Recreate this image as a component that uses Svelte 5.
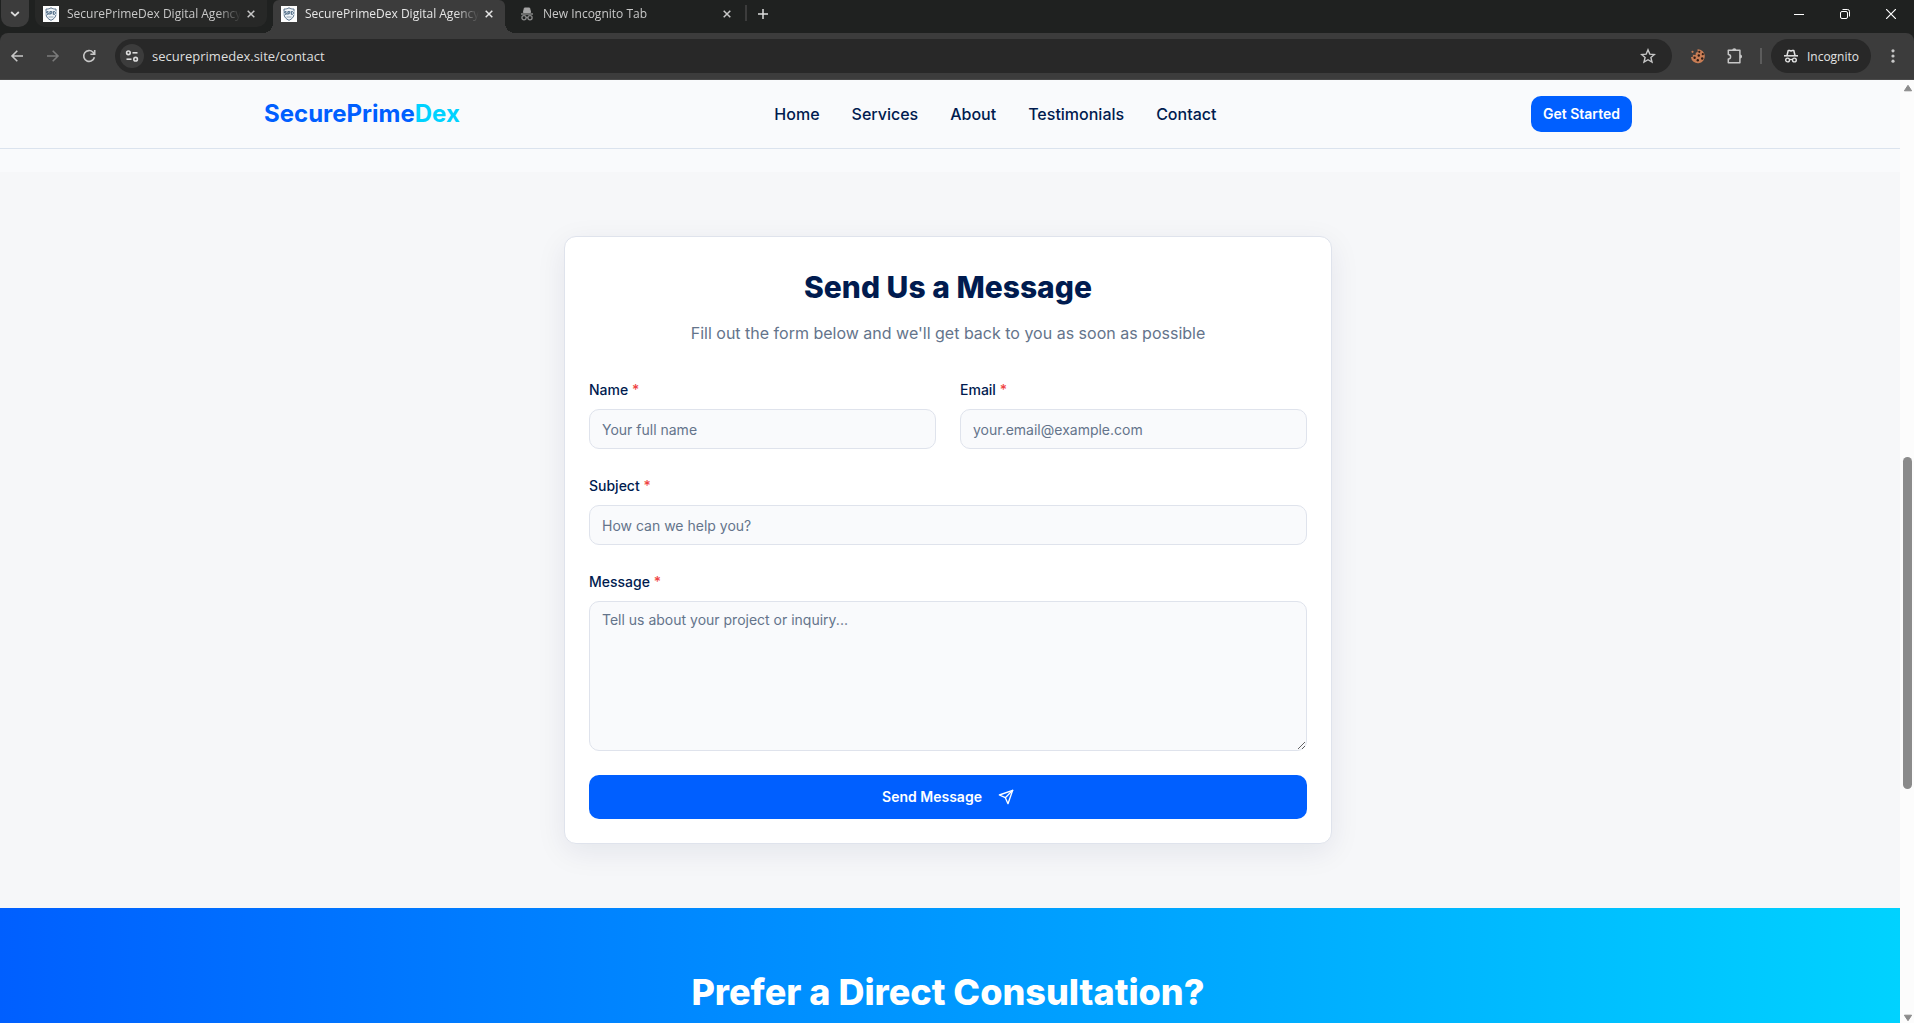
<script>
  const tabs = [
    { title: 'SecurePrimeDex Digital Agency', icon: 'shield', active: false },
    { title: 'SecurePrimeDex Digital Agency', icon: 'shield', active: true },
    { title: 'New Incognito Tab', icon: 'incognito', active: false }
  ];

  const links = ['Home', 'Services', 'About', 'Testimonials', 'Contact'];

  let address = $state('secureprimedex.site/contact');
  let form = $state({ name: '', email: '', subject: '', message: '' });

  function submit(event) {
    event.preventDefault();
  }
</script>

{#snippet incognito(size)}
  <svg width={size} height={size} viewBox="0 0 16 16" fill="none" aria-hidden="true">
    <path d="M1 7.800h14" stroke="currentColor" stroke-width="1.500" />
    <path d="M4 7.500 5.200 2.500h1.400L8 3l1.400-.5h1.400L12 7.500" stroke="currentColor" stroke-width="1.500" stroke-linejoin="round" />
    <circle cx="4.600" cy="12" r="1.900" stroke="currentColor" stroke-width="1.400" />
    <circle cx="11.400" cy="12" r="1.900" stroke="currentColor" stroke-width="1.400" />
    <path d="M6.400 11.800q1.600-1 3.200 0" stroke="currentColor" stroke-width="1.200" />
  </svg>
{/snippet}

{#snippet cross()}
  <svg width="8" height="8" viewBox="0 0 8 8" aria-hidden="true">
    <path d="M.7.7l6.600 6.600M7.300.7.7 7.300" stroke="currentColor" stroke-width="1.500" />
  </svg>
{/snippet}

<div class="window">
  <div class="strip">
    <button class="search-tabs" aria-label="Search tabs">
      <svg width="10" height="6" viewBox="0 0 10 6" fill="none" aria-hidden="true">
        <path d="M1.200 1 5 4.600 8.800 1" stroke="currentColor" stroke-width="1.800" />
      </svg>
    </button>

    <div class="tabs">
      {#each tabs as tab}
        <div class="tab" class:active={tab.active} class:plain={tab.icon === 'incognito'}>
          {#if tab.icon === 'shield'}
            <svg class="favicon" width="16" height="16" viewBox="0 0 16 16" aria-hidden="true">
              <path d="M0 0h16v16H0z" fill="#fdfdfd" />
              <path d="M8 1.800c1.600 1 3.200 1.300 5 1.300v4.800c0 3.200-2.200 5.200-5 6.400C5.200 13.100 3 11.100 3 7.900V3.100c1.800 0 3.400-.3 5-1.300z" fill="#eef3f7" stroke="#58718a" stroke-width="1" />
              <path d="M2.500 5h11v4h-11z" fill="#dfe8ef" />
              <path d="M5.400 5.600H3.600v1.300h1.700v1.400H3.500M6.900 8.800V5.600h1.900v1.700H6.900M10.400 5.500v2.900h1.100l.8-.7V6.200l-.8-.7z" fill="none" stroke="#3f5d7a" stroke-width=".9" />
              <path d="M5.500 11h5" stroke="#7890a5" stroke-width=".8" />
            </svg>
          {:else}
            <svg class="favicon" width="16" height="16" viewBox="0 0 16 16" fill="none" aria-hidden="true">
              <path d="M5.400 2h5.200l1 4.500H4.400z" fill="#a5a5a5" stroke="#a5a5a5" stroke-width="1" stroke-linejoin="round" />
              <path d="M2 8h12" stroke="#8b8b8b" stroke-width="1.400" />
              <circle cx="5" cy="11.800" r="2.100" stroke="#8b8b8b" stroke-width="1.300" />
              <circle cx="11" cy="11.800" r="2.100" stroke="#8b8b8b" stroke-width="1.300" />
              <path d="M7 11.500h2" stroke="#8b8b8b" />
            </svg>
          {/if}
          <button class="tab-title">{tab.title}</button>
          <button class="tab-close" aria-label="Close tab">{@render cross()}</button>
        </div>
      {/each}
    </div>

    <span class="strip-rule"></span>
    <button class="new-tab" aria-label="New tab">
      <svg width="10" height="10" viewBox="0 0 10 10" aria-hidden="true">
        <path d="M5 0v10M0 5h10" stroke="currentColor" stroke-width="1.500" />
      </svg>
    </button>

    <div class="controls">
      <button aria-label="Minimize">
        <svg width="10" height="10" viewBox="0 0 10 10"><path d="M0 5.500h10" stroke="currentColor" /></svg>
      </button>
      <button aria-label="Restore">
        <svg width="10" height="10" viewBox="0 0 10 10" fill="none" stroke="currentColor">
          <rect x=".5" y="2.500" width="7" height="7" rx="1.500" />
          <path d="M2.500.5h5a2 2 0 0 1 2 2v5" />
        </svg>
      </button>
      <button aria-label="Close">
        <svg width="10" height="10" viewBox="0 0 10 10"><path d="M0 0l10 10M10 0 0 10" stroke="currentColor" stroke-width="1.200" /></svg>
      </button>
    </div>
  </div>

  <div class="toolbar">
    <div class="history">
      <button aria-label="Back">
        <svg width="14" height="14" viewBox="0 0 14 14" fill="none" stroke="currentColor" stroke-width="1.600"><path d="M13 7H2.200M7.300 1.700 2 7l5.300 5.300" /></svg>
      </button>
      <button class="dim" aria-label="Forward">
        <svg width="14" height="14" viewBox="0 0 14 14" fill="none" stroke="currentColor" stroke-width="1.600"><path d="M1 7h10.800M6.700 1.700 12 7l-5.300 5.300" /></svg>
      </button>
      <button aria-label="Reload">
        <svg width="14" height="14" viewBox="0 0 14 14" fill="none" stroke="currentColor" stroke-width="1.600"><path d="M12.400 8.200A5.400 5.400 0 1 1 11 3.200l1.600 1.700M12.700 1v4.300H8.400" /></svg>
      </button>
    </div>

    <div class="address">
      <button class="site-info" aria-label="View site information">
        <svg width="14" height="14" viewBox="0 0 14 14" fill="none" stroke="currentColor" stroke-width="1.600">
          <circle cx="3.400" cy="3.800" r="1.800" /><path d="M7.500 3.800H12.500" />
          <circle cx="10.600" cy="10.200" r="1.800" /><path d="M1.500 10.200h5" />
        </svg>
      </button>
      <input type="text" aria-label="Address" bind:value={address} spellcheck="false" />
      <button class="star" aria-label="Bookmark this tab">
        <svg width="16" height="16" viewBox="0 0 16 16" fill="none" stroke="currentColor" stroke-width="1.400"><path d="M8 1.800l1.800 4.300 4.600.4-3.500 3 1.100 4.600L8 11.700l-4 2.400 1.100-4.600-3.500-3 4.600-.4z" /></svg>
      </button>
    </div>

    <div class="extensions">
      <button aria-label="Cookie extension">
        <svg width="16" height="16" viewBox="0 0 16 16" aria-hidden="true">
          <path d="M7.500 1.200a7 7 0 1 1-6.600 8L3.300 8.600 2.600 6.800l3 .2.200-2.200 1.900-.8z" fill="#c87d55" />
          <circle cx="2.500" cy="3.800" r="1.100" fill="#c87d55" />
          <g fill="#2f1c14">
            <circle cx="9.300" cy="3.800" r="1.100" /><circle cx="12.800" cy="6.200" r="1.100" /><circle cx="8.800" cy="7.500" r="1.200" />
            <circle cx="12.200" cy="10.500" r="1.200" /><circle cx="4.600" cy="9.800" r="1.200" /><circle cx="7.800" cy="12.300" r="1.200" />
          </g>
        </svg>
      </button>
      <button aria-label="Extensions">
        <svg width="18" height="18" viewBox="0 0 18 18" fill="none" aria-hidden="true">
          <path d="M2.300 3.300h11.600v12.400H2.300v-3.600a2.300 2.300 0 0 0 0-4.600z" stroke="currentColor" stroke-width="1.500" stroke-linejoin="round" />
          <path d="M6.200 3.300a2.100 2.100 0 0 1 4.200 0zM14 7.400a2.100 2.100 0 0 1 0 4.200z" fill="currentColor" />
        </svg>
      </button>
    </div>
    <span class="toolbar-rule"></span>
    <button class="profile">{@render incognito(16)}Incognito</button>
    <button class="menu" aria-label="Menu">
      <svg width="4" height="14" viewBox="0 0 4 14" fill="currentColor"><circle cx="2" cy="1.800" r="1.600" /><circle cx="2" cy="7" r="1.600" /><circle cx="2" cy="12.200" r="1.600" /></svg>
    </button>
  </div>

  <div class="viewport">
    <div class="page">
      <header>
        <div class="bar">
          <a class="logo" href="#home">SecurePrime<span>Dex</span></a>
          <nav>
            {#each links as link}
              <a href={'#' + link.toLowerCase()}>{link}</a>
            {/each}
          </nav>
          <button class="primary start">Get Started</button>
        </div>
      </header>

      <main>
        <section class="contact">
          <form class="card" onsubmit={submit}>
            <h2>Send Us a Message</h2>
            <p>Fill out the form below and we'll get back to you as soon as possible</p>

            <div class="fields">
              <div class="pair">
                <div class="field">
                  <label for="name">Name <span>*</span></label>
                  <input id="name" type="text" placeholder="Your full name" bind:value={form.name} />
                </div>
                <div class="field">
                  <label for="email">Email <span>*</span></label>
                  <input id="email" type="email" placeholder="your.email@example.com" bind:value={form.email} />
                </div>
              </div>
              <div class="field">
                <label for="subject">Subject <span>*</span></label>
                <input id="subject" type="text" placeholder="How can we help you?" bind:value={form.subject} />
              </div>
              <div class="field">
                <label for="message">Message <span>*</span></label>
                <textarea id="message" placeholder="Tell us about your project or inquiry..." bind:value={form.message}></textarea>
              </div>
              <button class="primary send" type="submit">
                Send Message
                <svg width="16" height="16" viewBox="0 0 24 24" fill="none" stroke="currentColor" stroke-width="2" stroke-linecap="round" stroke-linejoin="round" aria-hidden="true">
                  <path d="m22 2-7 20-4-9-9-4Z" /><path d="M22 2 11 13" />
                </svg>
              </button>
            </div>
          </form>
        </section>

        <section class="consult">
          <h2>Prefer a Direct Consultation?</h2>
        </section>
      </main>
    </div>

    <div class="scrollbar" aria-hidden="true">
      <svg width="10" height="8" viewBox="0 0 10 8"><path d="M5 1.300 8.600 6.800H1.400z" fill="#8b8b8b" stroke="#8b8b8b" stroke-linejoin="round" /></svg>
      <div class="track"><div class="thumb"></div></div>
      <svg width="10" height="8" viewBox="0 0 10 8"><path d="M5 6.700 1.400 1.200h7.200z" fill="#8b8b8b" stroke="#8b8b8b" stroke-linejoin="round" /></svg>
    </div>
  </div>
</div>

<style>
  :global(body) {
    margin: 0;
    overflow: hidden;
  }

  .window,
  .window * {
    box-sizing: border-box;
  }

  .window {
    height: 100vh;
    display: flex;
    flex-direction: column;
    background: #1f2120;
    font-family: Inter, 'Liberation Sans', sans-serif;
  }

  button {
    border: 0;
    padding: 0;
    background: none;
    color: inherit;
    font: inherit;
    display: flex;
    align-items: center;
    justify-content: center;
    cursor: pointer;
  }

  svg {
    display: block;
    flex: none;
  }

  /* Tab strip */
  .strip {
    flex: none;
    height: 33px;
    display: flex;
    align-items: flex-start;
    color: #dcdcdc;
    font-family: 'Open Sans', 'Noto Sans', sans-serif;
    font-size: 12px;
  }

  .search-tabs {
    width: 28px;
    height: 27px;
    margin: 0 6px 0 1px;
    border-radius: 0 0 10px 10px;
    background: #3c3c3c;
  }

  .tabs {
    display: flex;
    gap: 6px;
  }

  .tab {
    position: relative;
    width: 232px;
    height: 27px;
    display: flex;
    align-items: center;
    padding: 0 12px 0 8px;
    border-radius: 0 0 10px 10px;
    background: #272827;
    color: #c8c8c8;
  }

  .tab.plain {
    background: none;
  }

  .tab.active {
    height: 33px;
    padding-bottom: 6px;
    border-radius: 6px 6px 0 0;
    background: #3c3c3c;
    color: #e6e6e6;
  }

  .tab.active::before,
  .tab.active::after {
    content: '';
    position: absolute;
    bottom: 0;
    width: 10px;
    height: 10px;
  }

  .tab.active::before {
    right: 100%;
    background: radial-gradient(circle at 0 0, transparent 10px, #3c3c3c 10px);
  }

  .tab.active::after {
    left: 100%;
    background: radial-gradient(circle at 100% 0, transparent 10px, #3c3c3c 10px);
  }

  .favicon {
    margin-right: 8px;
  }

  .tab-title {
    flex: 1;
    min-width: 0;
    height: 27px;
    justify-content: flex-start;
    white-space: nowrap;
    mask-image: linear-gradient(to right, #000 150px, transparent 174px);
  }

  .tab-close {
    width: 8px;
    height: 16px;
    margin-left: 4px;
  }

  .strip-rule {
    width: 2px;
    height: 16px;
    margin: 5px 11px 0 2px;
    background: #3c3c3c;
  }

  .new-tab {
    width: 10px;
    height: 27px;
  }

  .controls {
    display: flex;
    margin-left: auto;
    color: #ffffff;
  }

  .controls button {
    width: 46px;
    height: 27px;
  }

  /* Toolbar */
  .toolbar {
    flex: none;
    height: 47px;
    display: flex;
    align-items: center;
    padding: 0 19px 0 10px;
    border-bottom: 1px solid #4a4a4a;
    border-radius: 8px 8px 0 0;
    background: #3c3c3c;
    color: #c7c7c7;
    font-family: 'Open Sans', 'Noto Sans', sans-serif;
    font-size: 12px;
  }

  .history {
    display: flex;
    gap: 22px;
    margin-right: 19px;
  }

  .history .dim {
    color: #7b7b7b;
  }

  .address {
    flex: 1;
    height: 34px;
    display: flex;
    align-items: center;
    padding: 0 16px 0 5px;
    border-radius: 17px;
    background: #282828;
  }

  .site-info {
    width: 24px;
    height: 24px;
    border-radius: 50%;
    background: #3c3c3c;
    color: #dcdcdc;
  }

  .address input {
    flex: 1;
    min-width: 0;
    margin: 0 8px;
    padding: 0;
    border: 0;
    outline: 0;
    background: none;
    color: #dedede;
    font: inherit;
    font-size: 13px;
  }

  .extensions {
    display: flex;
    gap: 20px;
    margin: 0 16px 0 18px;
  }

  .toolbar-rule {
    width: 2px;
    height: 16px;
    margin-right: 9px;
    background: #5c5c5c;
  }

  .profile {
    height: 34px;
    gap: 8px;
    padding: 0 12px;
    border-radius: 17px;
    background: #282828;
    color: #e3e3e3;
  }

  .menu {
    margin-left: 20px;
  }

  /* Page */
  .viewport {
    flex: 1;
    min-height: 0;
    display: flex;
  }

  .page {
    flex: 1;
    min-width: 0;
    overflow: hidden;
    background: #f9fafc;
    color: #001b4f;
  }

  header {
    margin-bottom: 23px;
    padding-right: 4px;
    border-bottom: 1px solid #dbe3ee;
  }

  .bar {
    max-width: 1400px;
    margin: 0 auto;
    padding: 16px;
    display: flex;
    align-items: center;
    justify-content: space-between;
  }

  a {
    color: inherit;
    text-decoration: none;
  }

  .logo {
    color: #005fff;
    font-size: 24px;
    font-weight: 700;
    line-height: 32px;
  }

  .logo span {
    color: #00d2ff;
  }

  nav {
    display: flex;
    gap: 32px;
    font-size: 16px;
    font-weight: 500;
    line-height: 24px;
  }

  .primary {
    border-radius: 10px;
    background: #005fff;
    color: #ffffff;
    font-size: 14px;
    font-weight: 600;
    line-height: 20px;
  }

  .start {
    padding: 8px 12px;
  }

  h2,
  p {
    margin: 0;
    text-align: center;
  }

  .contact {
    padding: 64px 4px 64px 0;
    background: #f6f7f9;
  }

  .card {
    max-width: 768px;
    margin: 0 auto;
    padding: 24px;
    border: 1px solid #dfe3ec;
    border-radius: 12px;
    background: #ffffff;
    box-shadow: 0 8px 30px rgba(0, 27, 79, 0.08);
  }

  .card h2 {
    font-size: 30px;
    font-weight: 800;
    line-height: 52px;
  }

  .card p {
    margin: 8px 0 32px;
    color: #64748b;
    font-size: 16px;
    line-height: 24px;
  }

  .fields {
    display: flex;
    flex-direction: column;
    gap: 24px;
  }

  .pair {
    display: grid;
    grid-template-columns: 1fr 1fr;
    gap: 24px;
  }

  .field {
    display: flex;
    flex-direction: column;
    gap: 6px;
  }

  label {
    font-size: 14px;
    font-weight: 500;
    line-height: 26px;
  }

  label span {
    color: #ef4444;
  }

  .field input,
  .field textarea {
    width: 100%;
    margin: 0;
    padding: 8px 12px;
    border: 1px solid #dfe3ec;
    border-radius: 10px;
    background: #f9fafc;
    color: inherit;
    font: inherit;
    font-size: 14px;
    line-height: 20px;
  }

  .field input {
    height: 40px;
  }

  .field textarea {
    display: block;
    height: 150px;
    resize: vertical;
  }

  .field ::placeholder {
    color: #64748b;
    opacity: 1;
  }

  .send {
    height: 44px;
    gap: 16px;
  }

  .consult {
    padding: 64px 4px 64px 0;
    background: linear-gradient(to right, #005fff, #00d2ff);
    color: #ffffff;
  }

  .consult h2 {
    font-size: 36px;
    font-weight: 800;
    line-height: 40px;
  }

  .scrollbar {
    flex: none;
    width: 14px;
    display: flex;
    flex-direction: column;
    align-items: center;
    padding: 4px 0 1px 1px;
    background: #fcfcfc;
  }

  .track {
    flex: 1;
    display: grid;
    grid-template-rows: 365fr 332fr 225fr;
  }

  .thumb {
    grid-row: 2;
    width: 9px;
    border-radius: 5px;
    background: #8b8b8b;
  }
</style>
